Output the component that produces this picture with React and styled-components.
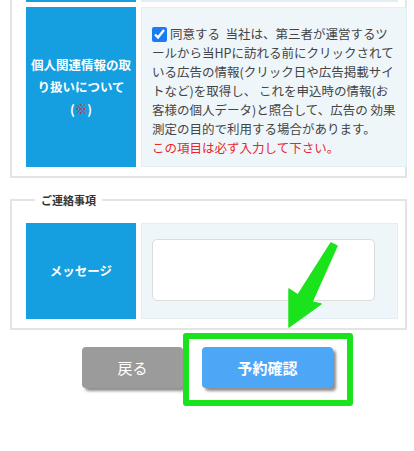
import React from 'react'
import styled, { createGlobalStyle } from 'styled-components'

const palette = {
  blue: '#159fe0',
  pale: '#eef6fa',
  paleBorder: '#e2eef4',
  frame: '#e4e4e4',
  text: '#444444',
  red: '#e8262b',
  green: '#1be31b',
}

const GlobalStyle = createGlobalStyle`
  html, body {
    margin: 0;
    padding: 0;
    background: #ffffff;
  }
  body {
    font-family: "Noto Sans CJK JP", "Noto Sans", "Liberation Sans", sans-serif;
    color: ${palette.text};
  }
`

const Page = styled.div`
  position: relative;
  width: 414px;
  height: 451px;
  overflow: hidden;
`

const Group = styled.fieldset`
  margin: ${(props) => props.$top || 0}px 7px 0 10px;
  padding: ${(props) => props.$padTop || 0}px 7px 9px 14px;
  border: 2px solid ${palette.frame};
  border-top: ${(props) => (props.$open ? 'none' : `2px solid ${palette.frame}`)};
  min-width: 0;
  display: flex;
  flex-direction: column;
  gap: 6px;
`

const Legend = styled.legend`
  margin-left: 9px;
  padding: 0 6px;
  font-size: 11px;
  line-height: 14px;
  font-weight: 700;
  color: #333;
`

const Row = styled.div`
  display: grid;
  grid-template-columns: 110px 1fr;
  column-gap: 5px;
  height: ${(props) => (props.$height ? `${props.$height}px` : 'auto')};
`

const Label = styled.div`
  background: ${palette.blue};
  color: #fff;
  font-size: 12.5px;
  line-height: 22px;
  font-weight: 700;
  text-align: center;
  display: flex;
  align-items: center;
  justify-content: center;
  padding: 0 2px;
  white-space: nowrap;
`

const Red = styled.span`
  color: ${palette.red};
  font-weight: 400;
`

const Cell = styled.div`
  background: ${palette.pale};
  border: 1px solid ${palette.paleBorder};
  padding: ${(props) => props.$pad || '0'};
  box-sizing: border-box;
`

const Consent = styled.div`
  font-size: 12.5px;
  line-height: 19px;
  color: ${palette.text};
  white-space: nowrap;
`

const Check = styled.input`
  width: 15px;
  height: 15px;
  margin: 0 3px 0 0;
  vertical-align: -3px;
  accent-color: #1a7cf0;
`

const Required = styled.div`
  color: ${palette.red};
`

const TextArea = styled.textarea`
  display: block;
  width: 223px;
  height: 62px;
  box-sizing: border-box;
  border: 1px solid #dcdcdc;
  border-radius: 5px;
  background: #fff;
  resize: none;
  outline: none;
`

const Buttons = styled.div`
  display: flex;
  justify-content: center;
  gap: 19px;
  margin-top: 17px;
  padding-left: 1px;
`

const Button = styled.button`
  width: ${(props) => props.$width}px;
  height: 41px;
  border: none;
  border-radius: 4px;
  background: ${(props) => props.$bg};
  color: #fff;
  font-family: "Noto Sans CJK JP", sans-serif;
  font-size: 15px;
  font-weight: ${(props) => (props.$bold ? 700 : 400)};
  box-shadow: 3px 3px 3px rgba(0, 0, 0, 0.45);
  cursor: pointer;
`

const Highlight = styled.div`
  position: relative;
`

const HighlightFrame = styled.div`
  position: absolute;
  top: -14px;
  left: -19px;
  right: -20px;
  bottom: -18px;
  border: 6px solid ${palette.green};
  border-radius: 3px;
  pointer-events: none;
`

const Arrow = styled.svg`
  position: absolute;
  left: 280px;
  top: 238px;
  width: 64px;
  height: 95px;
  pointer-events: none;
`

const App = () => {
  return (
    <Page>
      <GlobalStyle />
      <Group $open>
        <Row $height={1}>
          <Label />
          <Cell />
        </Row>
        <Row>
          <Label>
            <div>
              個人関連情報の取
              <br />
              り扱いについて
              <br />
              (<Red>※</Red>)
            </div>
          </Label>
          <Cell $pad="16px 10px 9px 10px">
            <Consent>
              <Check type="checkbox" defaultChecked />
              同意する&nbsp;&nbsp;当社は、第三者が運営するツ
              <br />
              ールから当HPに訪れる前にクリックされて
              <br />
              いる広告の情報(クリック日や広告掲載サイ
              <br />
              トなど)を取得し、 これを申込時の情報(お
              <br />
              客様の個人データ)と照合して、広告の 効果
              <br />
              測定の目的で利用する場合があります。
              <Required>この項目は必ず入力して下さい。</Required>
            </Consent>
          </Cell>
        </Row>
      </Group>

      <Group $top={15} $padTop={16}>
        <Legend>ご連絡事項</Legend>
        <Row $height={96}>
          <Label>メッセージ</Label>
          <Cell $pad="15px 10px">
            <TextArea />
          </Cell>
        </Row>
      </Group>

      <Buttons>
        <Button $width={101} $bg="#9b9b9b">戻る</Button>
        <Highlight>
          <Button $width={131} $bg="#4ea6f7" $bold>予約確認</Button>
          <HighlightFrame />
        </Highlight>
      </Buttons>

      <Arrow viewBox="0 0 64 95">
        <polygon
          points="51,5 57,8 32,64 41,66 9,89 9,51 18,57"
          fill={palette.green}
          stroke={palette.green}
          strokeWidth="1.5"
          strokeLinejoin="round"
        />
      </Arrow>
    </Page>
  )
}

export default App
